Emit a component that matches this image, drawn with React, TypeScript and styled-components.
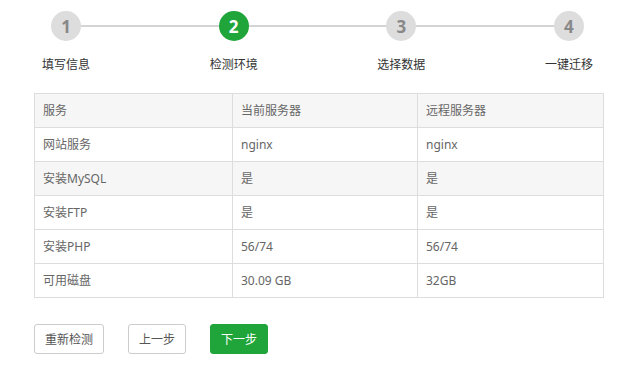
import { createGlobalStyle, styled } from "styled-components";

const GlobalStyle = createGlobalStyle`
    body {
        margin: 0;
        background: #fff;
        font-family: "Noto Sans", "Noto Sans CJK SC", sans-serif;
        font-size: 12px;
        color: #666;
    }
`

const Root = styled.div`
    width: 628px;
    height: 373px;
    padding: 11px 27px 0 34px;
    box-sizing: border-box;
`

const Steps = styled.div`
    position: relative;
    display: flex;
    justify-content: space-between;
    width: 567px;
`

const StepLine = styled.div`
    position: absolute;
    left: 32px;
    right: 32px;
    top: 14px;
    height: 2px;
    background: #d4d4d4;
`

const Step = styled.div`
    position: relative;
    width: 64px;
    display: flex;
    flex-direction: column;
    align-items: center;
`

const StepCircle = styled.div<{ $active?: boolean }>`
    width: 30px;
    height: 30px;
    border-radius: 50%;
    background: ${p => p.$active ? "#20a53a" : "#ddd"};
    color: ${p => p.$active ? "#fff" : "#888"};
    font-family: "Open Sans", "Noto Sans", sans-serif;
    font-size: 17px;
    font-weight: 700;
    display: flex;
    align-items: center;
    justify-content: center;
`

const StepLabel = styled.div`
    margin-top: 16px;
    font-size: 12px;
    line-height: 16px;
    color: #333;
    white-space: nowrap;
`

const Table = styled.table`
    margin-top: 20px;
    width: 569px;
    border-collapse: collapse;
    table-layout: fixed;
`

const Row = styled.tr<{ $shade?: boolean }>`
    background: ${p => p.$shade ? "#f6f6f6" : "#fff"};
`

const Cell = styled.td`
    height: 33px;
    padding: 0 8px;
    border: 1px solid #ddd;
    color: #666;
    font-size: 12px;
    line-height: 16px;
`

const HeadCell = styled(Cell).attrs({ as: "th" })`
    font-weight: normal;
    text-align: left;
`

const Actions = styled.div`
    margin-top: 26px;
    display: flex;
    gap: 24px;
`

const Button = styled.button<{ $primary?: boolean }>`
    height: 30px;
    padding: 0 10px;
    border-radius: 3px;
    border: 1px solid ${p => p.$primary ? "#20a53a" : "#ccc"};
    background: ${p => p.$primary ? "#20a53a" : "#fff"};
    color: ${p => p.$primary ? "#fff" : "#555"};
    font-family: inherit;
    font-size: 12px;
    cursor: pointer;
`

const steps = ["填写信息", "检测环境", "选择数据", "一键迁移"];

const rows = [
    ["网站服务", "nginx", "nginx"],
    ["安装MySQL", "是", "是"],
    ["安装FTP", "是", "是"],
    ["安装PHP", "56/74", "56/74"],
    ["可用磁盘", "30.09 GB", "32GB"],
];

export default function App() {
    return <Root>
        <GlobalStyle />
        <Steps>
            <StepLine />
            {steps.map((label, i) => <Step key={label}>
                <StepCircle $active={i === 1}>{i + 1}</StepCircle>
                <StepLabel>{label}</StepLabel>
            </Step>)}
        </Steps>
        <Table>
            <colgroup>
                <col style={{ width: 198 }} />
                <col style={{ width: 185 }} />
                <col style={{ width: 186 }} />
            </colgroup>
            <thead>
                <Row $shade>
                    <HeadCell>服务</HeadCell>
                    <HeadCell>当前服务器</HeadCell>
                    <HeadCell>远程服务器</HeadCell>
                </Row>
            </thead>
            <tbody>
                {rows.map((r, i) => <Row key={r[0]} $shade={i === 1}>
                    {r.map((c, j) => <Cell key={j}>{c}</Cell>)}
                </Row>)}
            </tbody>
        </Table>
        <Actions>
            <Button>重新检测</Button>
            <Button>上一步</Button>
            <Button $primary>下一步</Button>
        </Actions>
    </Root>;
}
